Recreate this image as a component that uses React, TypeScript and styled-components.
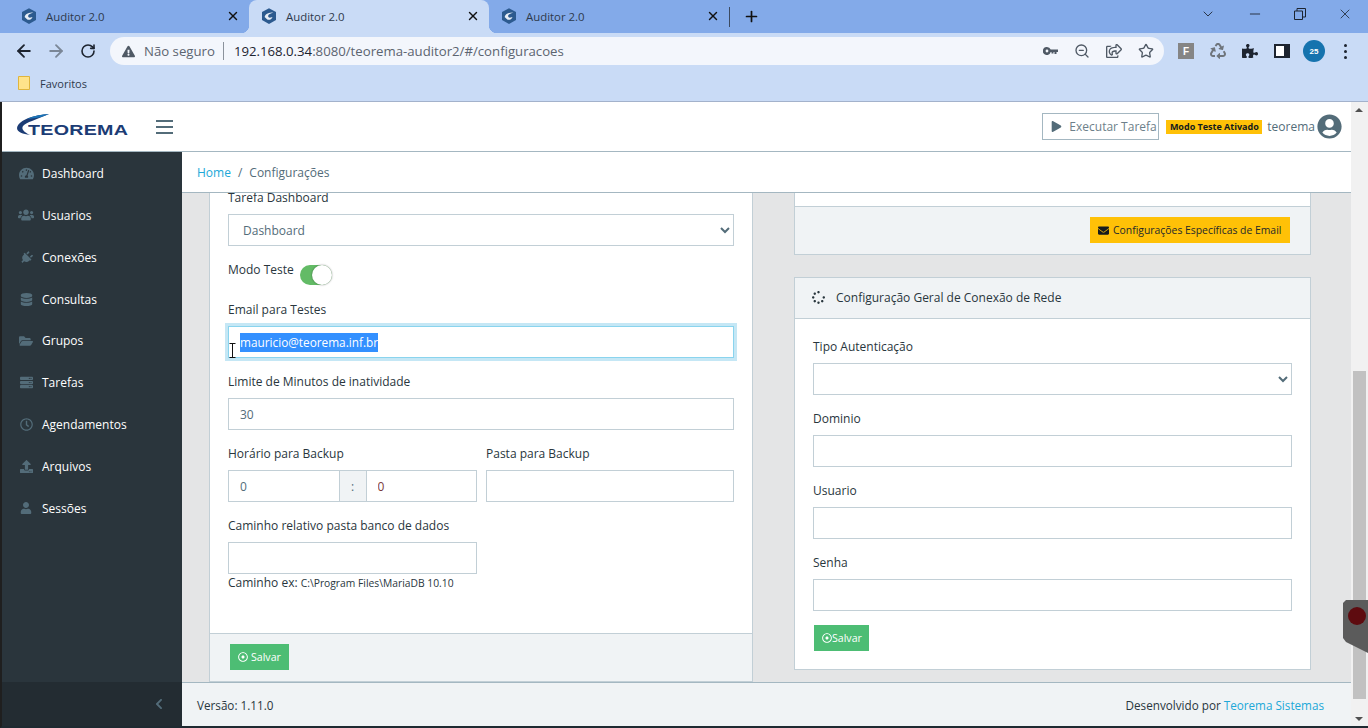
import styled, { createGlobalStyle } from "styled-components";
import { ArrowLeft, ArrowRight, ChevronDown, Minus, Plus, RotateCw, Star, X, ZoomOut } from "lucide-react";
import {
  FaChevronLeft,
  FaDatabase,
  FaEnvelope,
  FaExclamationTriangle,
  FaFolderOpen,
  FaPlay,
  FaPlug,
  FaPuzzlePiece,
  FaRecycle,
  FaRegClock,
  FaRegDotCircle,
  FaRegShareSquare,
  FaServer,
  FaSpinner,
  FaTachometerAlt,
  FaUpload,
  FaUser,
  FaUserCircle,
  FaUsers,
} from "react-icons/fa";

const GlobalStyle = createGlobalStyle`
  html, body {
    margin: 0;
    height: 100%;
    overflow: hidden;
    font-family: "Open Sans", "Noto Sans", sans-serif;
    font-size: 12px;
    color: #29363d;
  }
  * { box-sizing: border-box; }
`;

///// BROWSER CHROME
const Root = styled.div`
  display: flex;
  flex-direction: column;
  width: 1368px;
  height: 728px;
  overflow: hidden;
`;

const TabStrip = styled.div`
  display: flex;
  align-items: stretch;
  height: 33px;
  padding-left: 9px;
  background: #83aae9;
`;

const Tab = styled.div<{ $active?: boolean }>`
  position: relative;
  display: flex;
  align-items: center;
  width: 240px;
  padding: 0 9px 1px 13px;
  border-radius: 8px 8px 0 0;
  background: ${p => (p.$active ? "#c9dbf6" : "transparent")};
  color: #2e3a4c;
  font-size: 11.4px;
  svg.close {
    margin-left: auto;
    color: #111;
  }
  ${p =>
    p.$active &&
    `
    &::before, &::after {
      content: "";
      position: absolute;
      bottom: 0;
      width: 8px;
      height: 8px;
    }
    &::before {
      left: -8px;
      background: radial-gradient(circle at 0 0, transparent 8px, #c9dbf6 8.5px);
    }
    &::after {
      right: -8px;
      background: radial-gradient(circle at 100% 0, transparent 8px, #c9dbf6 8.5px);
    }
  `}
`;

const TabTitle = styled.span`
  margin-left: 10px;
`;

const TabDivider = styled.div`
  width: 1px;
  height: 20px;
  margin: 7px 0 0 0;
  background: #3c4a60;
`;

const NewTab = styled.div`
  display: flex;
  align-items: center;
  margin-left: 13px;
  color: #111;
`;

const WindowControls = styled.div`
  display: flex;
  align-items: center;
  margin-left: auto;
  padding-right: 15px;
  padding-bottom: 6px;
  color: #1c2430;
  gap: 31px;
  svg { display: block; }
`;

const Toolbar = styled.div`
  display: flex;
  align-items: center;
  height: 35px;
  padding: 4px 0 3px 8px;
  background: #c9dbf6;
`;

const NavButton = styled.div<{ $dim?: boolean }>`
  display: flex;
  justify-content: center;
  width: 32px;
  color: ${p => (p.$dim ? "#7b8797" : "#1d2430")};
`;

const Omnibox = styled.div`
  display: flex;
  align-items: center;
  width: 1054px;
  height: 28px;
  margin-left: 6px;
  padding: 0 10px 0 12px;
  border-radius: 14px;
  background: #f3f6fc;
  color: #5c6470;
  font-size: 13.2px;
`;

const SecurityText = styled.span`
  margin-left: 9px;
`;

const OmniDivider = styled.span`
  width: 1px;
  height: 18px;
  margin: 0 10px 0 8px;
  background: #8b929c;
`;

const UrlHost = styled.span`
  color: #1d2430;
`;

const OmniActions = styled.div`
  display: flex;
  align-items: center;
  gap: 16px;
  margin-left: auto;
  color: #4f5965;
`;

const Extensions = styled.div`
  display: flex;
  align-items: center;
  gap: 16px;
  margin-left: 14px;
  color: #1d2430;
`;

const ExtF = styled.div`
  display: flex;
  align-items: center;
  justify-content: center;
  width: 16px;
  height: 16px;
  background: #858585;
  color: #fff;
  font: bold 10px "Liberation Sans", sans-serif;
`;

const ProfileDot = styled.div`
  display: flex;
  align-items: center;
  justify-content: center;
  width: 22px;
  height: 22px;
  margin: 0 -3px;
  border-radius: 50%;
  background: #1573ae;
  color: #fff;
  font: bold 8px "Liberation Sans", sans-serif;
`;

const Kebab = styled.div`
  display: flex;
  flex-direction: column;
  gap: 3px;
  margin-left: 6px;
  i {
    width: 3px;
    height: 3px;
    border-radius: 50%;
    background: #1d2430;
  }
`;

const BookmarksBar = styled.div`
  display: flex;
  align-items: center;
  height: 34px;
  padding: 0 0 3px 18px;
  border-bottom: 1px solid #a3b2cb;
  background: #c9dbf6;
  color: #2e3a4c;
  font-size: 11px;
`;

const BookmarkLabel = styled.span`
  margin-left: 10px;
`;

///// APP SHELL
const Viewport = styled.div`
  position: relative;
  display: flex;
  flex: 1;
  min-height: 0;
  border-left: 2px solid #1f1f1f;
  border-bottom: 2px solid #1f2a31;
`;

const Page = styled.div`
  display: flex;
  flex: 1;
  flex-direction: column;
  min-width: 0;
`;

const Header = styled.header`
  display: flex;
  align-items: center;
  flex: 0 0 50px;
  padding: 0 9px 0 14px;
  border-bottom: 1px solid #a4b7c1;
  background: #fff;
`;

const Logo = styled.div`
  position: relative;
  width: 114px;
  height: 32px;
  svg {
    position: absolute;
    left: 1px;
    top: 3px;
  }
`;

const LogoText = styled.span`
  position: absolute;
  left: 12px;
  top: 10px;
  color: #1c3c75;
  font: bold 15.5px "Liberation Sans", sans-serif;
  letter-spacing: 0.2px;
  transform: scaleX(1.27);
  transform-origin: left center;
`;

const Burger = styled.div`
  display: flex;
  flex-direction: column;
  gap: 4px;
  width: 17px;
  margin-left: 26px;
  i {
    height: 2px;
    background: #536c79;
  }
`;

const HeaderRight = styled.div`
  display: flex;
  align-items: center;
  margin-left: auto;
`;

const RunButton = styled.div`
  display: flex;
  align-items: center;
  gap: 7px;
  width: 117px;
  height: 27px;
  padding-left: 8px;
  border: 1px solid #a4b7c1;
  color: #6d7f8a;
  white-space: nowrap;
  svg { color: #536c79; flex-shrink: 0; }
`;

const TestBadge = styled.span`
  margin-left: 7px;
  width: 96px;
  height: 14px;
  line-height: 14px;
  text-align: center;
  background: #ffc107;
  color: #151b1e;
  font-size: 9px;
  font-weight: 700;
  white-space: nowrap;
`;

const UserName = styled.span`
  margin: 0 2px 0 5px;
  color: #536c79;
`;

const Body = styled.div`
  display: flex;
  flex: 1;
  min-height: 0;
`;

const Sidebar = styled.aside`
  display: flex;
  flex-direction: column;
  flex: 0 0 180px;
  background: #2a353c;
`;

const Nav = styled.nav`
  flex: 1;
  padding-top: 0.4px;
`;

const NavItem = styled.a`
  display: flex;
  align-items: center;
  height: 41.9px;
  padding-left: 17px;
  color: #fff;
`;

const NavIcon = styled.span<{ $turn?: boolean }>`
  display: flex;
  justify-content: center;
  flex: 0 0 14px;
  min-width: 0;
  margin-right: 9px;
  color: #536c79;
  transform: ${p => (p.$turn ? "rotate(45deg)" : "none")};
  svg { flex: none; }
`;

const SidebarToggle = styled.div`
  display: flex;
  align-items: center;
  justify-content: flex-end;
  height: 44px;
  padding-right: 17px;
  background: #232c32;
  color: #536c79;
`;

const Content = styled.div`
  display: flex;
  flex: 1;
  flex-direction: column;
  min-width: 0;
  background: #e4e5e6;
`;

const Breadcrumb = styled.div`
  display: flex;
  align-items: center;
  flex: 0 0 41px;
  padding-left: 15px;
  border-bottom: 1px solid #a4b7c1;
  background: #fff;
  color: #536c79;
  a { color: #20a8d8; }
  span { margin: 0 7px; }
`;

const Main = styled.main`
  display: grid;
  flex: 1;
  min-height: 0;
  grid-template-columns: 544px 517px;
  column-gap: 41px;
  align-items: start;
  padding-left: 27px;
  overflow: hidden;
`;

// the page is scrolled: both columns start above the visible area
const Column = styled.div`
  display: flex;
  flex-direction: column;
  gap: 22px;
  margin-top: -24px;
`;

const Card = styled.section`
  border: 1px solid #c2cfd6;
  background: #fff;
`;

const CardHeader = styled.div`
  display: flex;
  align-items: center;
  gap: 11px;
  height: 41px;
  padding: 0 0 2px 17px;
  border-bottom: 1px solid #c2cfd6;
  background: #f0f3f5;
`;

const CardBody = styled.div<{ $height?: number }>`
  padding: 18px 18px 0;
  height: ${p => (p.$height ? `${p.$height}px` : "auto")};
`;

const CardFooter = styled.div<{ $end?: boolean }>`
  display: flex;
  justify-content: ${p => (p.$end ? "flex-end" : "flex-start")};
  height: 48px;
  padding: 10px 20px;
  border-top: 1px solid #c2cfd6;
  background: #f0f3f5;
`;

const Field = styled.div`
  margin-bottom: 14px;
`;

const Label = styled.label`
  display: block;
  height: 18px;
  margin-bottom: 8px;
  line-height: 20px;
  color: #29363d;
`;

const ToggleRow = styled.div`
  display: flex;
  height: 40px;
  line-height: 20px;
  gap: 6px;
`;

const Switch = styled.div`
  position: relative;
  width: 32px;
  height: 20px;
  margin-top: 5px;
  border-radius: 10px;
  background: #63bb66;
  &::after {
    content: "";
    position: absolute;
    right: 0;
    top: 0;
    width: 20px;
    height: 20px;
    border-radius: 50%;
    background: #fff;
    box-shadow: 0 0 2px rgba(0, 0, 0, 0.45);
  }
`;

const Select = styled.select`
  display: block;
  width: 100%;
  height: 32px;
  padding: 0 10px;
  border: 1px solid #c2cfd6;
  border-radius: 0;
  background: #fff;
  color: #536c79;
  font: inherit;
`;

const Input = styled.input`
  display: block;
  width: 100%;
  height: 32px;
  padding: 0 11px;
  border: 1px solid #c2cfd6;
  border-radius: 0;
  outline: none;
  background: #fff;
  color: #536c79;
  font: inherit;
  &:read-only { cursor: text; }
`;

const FocusedInput = styled.div`
  position: relative;
  display: flex;
  align-items: center;
  height: 32px;
  padding-left: 11px;
  border: 1px solid #8ad4ee;
  box-shadow: 0 0 0 3px #c5e7f5;
  background: #fff;
  color: #fff;
`;

const SelectedText = styled.span`
  background: #3390ff;
  line-height: 19px;
  font-size: 11.8px;
`;

const TextCursor = styled.svg`
  position: absolute;
  left: 0;
  top: 16px;
`;

const TwoCols = styled.div`
  display: grid;
  grid-template-columns: 249px 248px;
  column-gap: 9px;
`;

const TimeGroup = styled.div`
  display: flex;
  ${Input} { flex: 1; min-width: 0; color: #7a3a3a; }
  ${Input}:first-child { color: #536c79; }
`;

const TimeAddon = styled.div`
  display: flex;
  align-items: center;
  justify-content: center;
  flex: 0 0 26px;
  border-top: 1px solid #c2cfd6;
  border-bottom: 1px solid #c2cfd6;
  background: #f0f3f5;
  color: #536c79;
`;

const HalfField = styled.div`
  width: 249px;
  height: 76px;
`;

const Hint = styled.div`
  height: 14px;
  margin-top: 1px;
  line-height: 16px;
  white-space: nowrap;
  small { font-size: 10.3px; }
`;

const Spacer = styled.div`
  height: 41px;
`;

const Button = styled.div<{ $color: string; $dark?: boolean }>`
  display: flex;
  align-items: center;
  gap: 3px;
  height: 26px;
  padding: 0 8px;
  background: ${p => p.$color};
  color: ${p => (p.$dark ? "#23282c" : "#fff")};
  font-size: 10.6px;
  white-space: nowrap;
  svg { flex-shrink: 0; }
`;

const WideButton = styled(Button)`
  width: 200px;
  gap: 4px;
  font-size: 10.4px;
  svg { color: #151b1e; }
`;

const FormSave = styled(Button)`
  width: 55px;
  margin: 0 0 18px 1px;
  gap: 0;
`;

const Footer = styled.footer`
  display: flex;
  align-items: center;
  justify-content: space-between;
  flex: 0 0 44px;
  padding: 1px 27px 0 15px;
  border-top: 1px solid #a4b7c1;
  background: #f0f3f5;
  color: #29363d;
  font-size: 11.7px;
  a { color: #20a8d8; }
`;

const ScrollTrack = styled.div`
  position: relative;
  display: flex;
  flex-direction: column;
  flex: 0 0 17px;
  background: #f1f1f1;
`;

const ScrollArrow = styled.div<{ $down?: boolean }>`
  width: 0;
  height: 0;
  margin: ${p => (p.$down ? "auto 0 5px 4px" : "6px 0 0 4px")};
  border-left: 4px solid transparent;
  border-right: 4px solid transparent;
  ${p => (p.$down ? "border-top: 4px solid #505050;" : "border-bottom: 4px solid #505050;")}
`;

const ScrollThumb = styled.div`
  position: absolute;
  left: 2px;
  top: 269px;
  width: 13px;
  height: 328px;
  background: #c1c1c1;
`;

const FloatWidget = styled.svg`
  position: absolute;
  right: 0;
  top: 498px;
`;

const menu = [
  { label: "Dashboard", icon: <FaTachometerAlt size={15} /> },
  { label: "Usuarios", icon: <FaUsers size={16} /> },
  { label: "Conexões", icon: <FaPlug size={13} />, turn: true },
  { label: "Consultas", icon: <FaDatabase size={13} /> },
  { label: "Grupos", icon: <FaFolderOpen size={14} /> },
  { label: "Tarefas", icon: <FaServer size={13} /> },
  { label: "Agendamentos", icon: <FaRegClock size={13} /> },
  { label: "Arquivos", icon: <FaUpload size={13} /> },
  { label: "Sessões", icon: <FaUser size={12} /> },
];

const Favicon = () => (
  <svg width="14" height="16" viewBox="0 0 16 18">
    <path d="M8 0l8 4.5v9L8 18l-8-4.5v-9z" fill="#2c5a8f" />
    <path d="M3 10c1-4 5-5 10-5-3 1-6 2-6 4 0 1 1 2 2 2l3-1c-1 3-4 4-6 3-1-1-2-2-3-3z" fill="#e8eef6" />
  </svg>
);

const LogoSwoosh = () => (
  <svg width="33" height="22" viewBox="0 0 33 22">
    <path d="M32 0C18 1 2 5 0 14c0 4 6 6 13 7C7 18 4 15 6 12c2-2 5-4 9-5z" fill="#1c3c75" />
    <path d="M32 0C24 .500 16 2 10 5c6-1 12-1 17-3z" fill="#1a74b8" />
  </svg>
);

const KeyIcon = () => (
  <svg width="15" height="8" viewBox="0 0 15 8" fill="#4f5965">
    <path d="M4 0a4 4 0 0 1 3.700 2.500H15v2.600h-1.500V7h-2V5.100h-1V6.500h-2V5.100h-.8A4 4 0 1 1 4 0zm0 2.600a1.400 1.400 0 1 0 0 2.800 1.400 1.400 0 0 0 0-2.800z" />
  </svg>
);

const SidePanelIcon = () => (
  <svg width="16" height="14" viewBox="0 0 16 14">
    <path d="M1 1h14v12H1z" fill="#fff" stroke="#1d2430" strokeWidth="2" />
    <path d="M10 1h5v12h-5z" fill="#1d2430" />
  </svg>
);

const RestoreIcon = () => (
  <svg width="12" height="12" viewBox="0 0 12 12" fill="none" stroke="#1c2430">
    <path d="M.5 3h8v8.500h-8zM3 3V.5h8.500V9H8.500" />
  </svg>
);

const BrowserChrome = () => (
  <>
    <TabStrip>
      {[false, true, false].map((active, i) => (
        <Tab key={i} $active={active}>
          <Favicon />
          <TabTitle>Auditor 2.0</TabTitle>
          <X className="close" size={14} strokeWidth={2.4} />
        </Tab>
      ))}
      <TabDivider />
      <NewTab>
        <Plus size={17} strokeWidth={2.4} />
      </NewTab>
      <WindowControls>
        <ChevronDown size={16} strokeWidth={1.3} />
        <Minus size={16} strokeWidth={1.3} />
        <RestoreIcon />
        <X size={16} strokeWidth={1.2} />
      </WindowControls>
    </TabStrip>
    <Toolbar>
      <NavButton>
        <ArrowLeft size={20} strokeWidth={2.2} />
      </NavButton>
      <NavButton $dim>
        <ArrowRight size={20} strokeWidth={2.2} />
      </NavButton>
      <NavButton>
        <RotateCw size={16} strokeWidth={2.4} />
      </NavButton>
      <Omnibox>
        <FaExclamationTriangle size={13} color="#4f5965" />
        <SecurityText>Não seguro</SecurityText>
        <OmniDivider />
        <span>
          <UrlHost>192.168.0.34</UrlHost>:8080/teorema-auditor2/#/configuracoes
        </span>
        <OmniActions>
          <KeyIcon />
          <ZoomOut size={16} />
          <FaRegShareSquare size={16} />
          <Star size={16} />
        </OmniActions>
      </Omnibox>
      <Extensions>
        <ExtF>F</ExtF>
        <FaRecycle size={16} color="#6f757c" />
        <FaPuzzlePiece size={16} />
        <SidePanelIcon />
        <ProfileDot>25</ProfileDot>
        <Kebab>
          <i />
          <i />
          <i />
        </Kebab>
      </Extensions>
    </Toolbar>
    <BookmarksBar>
      <svg width="12" height="14" viewBox="0 0 12 14">
        <path d="M.5.500h11v13H.5z" fill="#ffe38a" stroke="#e0b53c" />
      </svg>
      <BookmarkLabel>Favoritos</BookmarkLabel>
    </BookmarksBar>
  </>
);

const AppHeader = () => (
  <Header>
    <Logo>
      <LogoSwoosh />
      <LogoText>TEOREMA</LogoText>
    </Logo>
    <Burger>
      <i />
      <i />
      <i />
    </Burger>
    <HeaderRight>
      <RunButton>
        <FaPlay size={11} />
        Executar Tarefa
      </RunButton>
      <TestBadge>Modo Teste Ativado</TestBadge>
      <UserName>teorema</UserName>
      <FaUserCircle size={25} color="#536c79" />
    </HeaderRight>
  </Header>
);

const GeneralCard = () => (
  <Card>
    <CardBody>
      <Field>
        <Label>Tarefa Dashboard</Label>
        <Select defaultValue="Dashboard">
          <option>Dashboard</option>
        </Select>
      </Field>
      <ToggleRow>
        Modo Teste
        <Switch />
      </ToggleRow>
      <Field>
        <Label>Email para Testes</Label>
        <FocusedInput>
          <SelectedText>mauricio@teorema.inf.br</SelectedText>
          <TextCursor width="7" height="15" viewBox="0 0 7 15" fill="none" stroke="#111">
            <path d="M.5.500h6M3.500.500v14M.5 14.500h6" />
          </TextCursor>
        </FocusedInput>
      </Field>
      <Field>
        <Label>Limite de Minutos de inatividade</Label>
        <Input readOnly value="30" />
      </Field>
      <TwoCols>
        <Field>
          <Label>Horário para Backup</Label>
          <TimeGroup>
            <Input readOnly value="0" />
            <TimeAddon>:</TimeAddon>
            <Input readOnly value="0" />
          </TimeGroup>
        </Field>
        <Field>
          <Label>Pasta para Backup</Label>
          <Input readOnly />
        </Field>
      </TwoCols>
      <HalfField>
        <Label>Caminho relativo pasta banco de dados</Label>
        <Input readOnly />
        <Hint>
          Caminho ex: <small>C:\Program Files\MariaDB 10.10</small>
        </Hint>
      </HalfField>
      <Spacer />
    </CardBody>
    <CardFooter>
      <Button $color="#4dbd74">
        <FaRegDotCircle size={10} />
        Salvar
      </Button>
    </CardFooter>
  </Card>
);

const NetworkCard = () => (
  <Card>
    <CardHeader>
      <FaSpinner size={13} color="#29363d" />
      Configuração Geral de Conexão de Rede
    </CardHeader>
    <CardBody>
      <Field>
        <Label>Tipo Autenticação</Label>
        <Select />
      </Field>
      <Field>
        <Label>Dominio</Label>
        <Input readOnly />
      </Field>
      <Field>
        <Label>Usuario</Label>
        <Input readOnly />
      </Field>
      <Field>
        <Label>Senha</Label>
        <Input readOnly />
      </Field>
      <FormSave $color="#4dbd74">
        <FaRegDotCircle size={10} />
        Salvar
      </FormSave>
    </CardBody>
  </Card>
);

export default function App() {
  return (
    <Root>
      <GlobalStyle />
      <BrowserChrome />
      <Viewport>
        <Page>
          <AppHeader />
          <Body>
            <Sidebar>
              <Nav>
                {menu.map(item => (
                  <NavItem key={item.label}>
                    <NavIcon $turn={item.turn}>{item.icon}</NavIcon>
                    {item.label}
                  </NavItem>
                ))}
              </Nav>
              <SidebarToggle>
                <FaChevronLeft size={12} />
              </SidebarToggle>
            </Sidebar>
            <Content>
              <Breadcrumb>
                <a>Home</a>
                <span>/</span>
                Configurações
              </Breadcrumb>
              <Main>
                <Column>
                  <GeneralCard />
                </Column>
                <Column>
                  <Card>
                    <CardBody $height={36} />
                    <CardFooter $end>
                      <WideButton $color="#ffc107" $dark>
                        <FaEnvelope size={11} />
                        Configurações Específicas de Email
                      </WideButton>
                    </CardFooter>
                  </Card>
                  <NetworkCard />
                </Column>
              </Main>
              <Footer>
                <span>Versão: 1.11.0</span>
                <span>
                  Desenvolvido por <a>Teorema Sistemas</a>
                </span>
              </Footer>
            </Content>
          </Body>
        </Page>
        <ScrollTrack>
          <ScrollArrow />
          <ScrollThumb />
          <ScrollArrow $down />
        </ScrollTrack>
        <FloatWidget width="25" height="53" viewBox="0 0 25 53">
          <path d="M3 0h22v53L3 42 0 38V3z" fill="#5b5b5b" />
          <circle cx="14" cy="16" r="9" fill="#5e0b0f" />
        </FloatWidget>
      </Viewport>
    </Root>
  );
}
